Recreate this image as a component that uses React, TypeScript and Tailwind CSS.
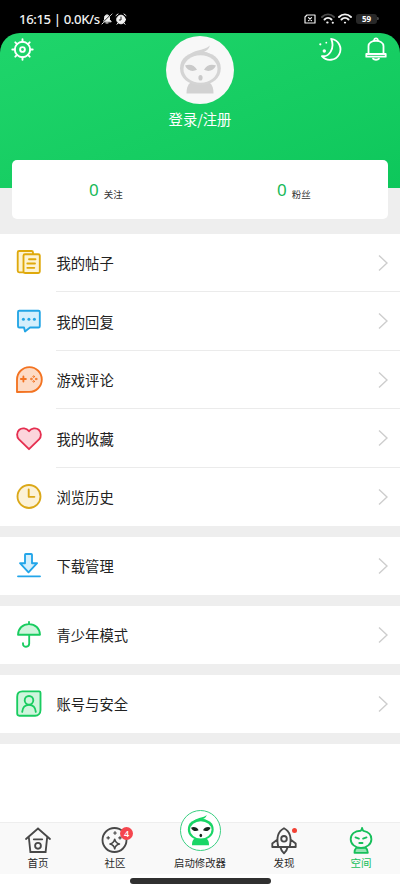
import type { ReactNode } from "react";

type IconProps = { children: ReactNode; color?: string; fill?: string; size?: string; box?: string; width?: number };

function Icon({ children, color = "currentColor", fill = "none", size = "h-8 w-8", box = "0 0 32 32", width = 1.85 }: IconProps) {
  return (
    <svg viewBox={box} className={`${size} block shrink-0`} fill={fill} stroke={color} strokeWidth={width} strokeLinecap="round" strokeLinejoin="round">
      {children}
    </svg>
  );
}

function Chevron() {
  return (
    <Icon size="h-4 w-[10px]" box="0 0 10 16" color="#cdcdcd" width={1.4}>
      <path d="M1 .5l8 7.500L1 15.500" strokeLinecap="butt" strokeLinejoin="miter" />
    </Icon>
  );
}

function PostsIcon() {
  return (
    <Icon color="#dfa90b" fill="#fdf3d3">
      <path d="M10.500 25.300H6.200a1.500 1.500 0 0 1-1.500-1.500V5.500A1.500 1.500 0 0 1 6.200 4h12.300a1.500 1.500 0 0 1 1.500 1.500v1.700" />
      <rect x="10.500" y="7.200" width="16.300" height="18.800" rx="1.500" />
      <path d="M16 12.200h6.500M14.300 16.500h7.700M14.300 20.800h7" fill="none" />
    </Icon>
  );
}

function ReplyIcon() {
  return (
    <Icon color="#22a5e5" fill="#d4effc">
      <path d="M6.300 4.700h19.200A1.300 1.300 0 0 1 26.800 6v14.200a1.300 1.300 0 0 1-1.300 1.300H17L12 25.500 11 21.500H6.300A1.300 1.300 0 0 1 5 20.200V6a1.300 1.300 0 0 1 1.300-1.300z" />
      <g fill="#22a5e5" stroke="none"><circle cx="10.400" cy="13.300" r="1.500" /><circle cx="15.900" cy="13.300" r="1.500" /><circle cx="21.400" cy="13.300" r="1.500" /></g>
    </Icon>
  );
}

function GameIcon() {
  return (
    <Icon color="#f37321" fill="#fddbc5">
      <path d="M4 28V15.500A12.400 12.400 0 1 1 16.400 27.900z" />
      <path d="M10.400 12.500v5M7.900 15h5" />
      <g strokeWidth="1"><circle cx="20.700" cy="12.600" r=".8" /><circle cx="20.700" cy="17.400" r=".8" /><circle cx="18.300" cy="15" r=".8" /><circle cx="23.100" cy="15" r=".8" /></g>
    </Icon>
  );
}

function HeartIcon() {
  return (
    <Icon color="#e52f50" fill="#fcd5dc">
      <path d="M16 26.200L6 16.400C3.400 13.700 3.500 9.100 6.300 6.700c2.800-2.300 7-1.600 9.700 1.500 2.700-3.100 6.900-3.800 9.700-1.500 2.800 2.400 2.900 7 .3 9.700z" />
    </Icon>
  );
}

function HistoryIcon() {
  return (
    <Icon color="#dba818" fill="#fcf2d7">
      <circle cx="16" cy="15.500" r="11.500" />
      <path d="M15.700 8.500v7.300h5.700" fill="none" />
    </Icon>
  );
}

function DownloadIcon() {
  return (
    <Icon color="#22a5e9" fill="#d4effc">
      <path d="M12.800 4h5.400a.8.8 0 0 1 .8.8v8.400h5.100l-8.600 9.100-8.500-9.100h5V4.800a.8.8 0 0 1 .8-.8z" />
      <path d="M5 26.300h22" />
    </Icon>
  );
}

function UmbrellaIcon() {
  return (
    <Icon color="#19cc60" fill="#cff5dd">
      <path d="M16 2.800v2.100M5 15.700C5.200 9.200 9.800 5.100 16 5.100s10.800 4.100 11 10.600z" />
      <path d="M16.200 15.800v8.800c0 4.200-6.200 4.200-6.200.3v-.8" fill="none" />
    </Icon>
  );
}

function AccountIcon() {
  return (
    <Icon color="#19cc60" fill="#cff5dd">
      <path d="M9.500 3.400h16.600c.9 0 1.400.6 1.400 1.400v17.200c0 3.300-2.200 5.700-5.400 5.700H6.300c-1.400 0-2.100-.8-2.100-2.100V8.700c0-3.300 2-5.300 5.300-5.300z" />
      <circle cx="16" cy="12.300" r="4.300" />
      <path d="M9.200 23.900c.4-4.600 3-7.100 6.800-7.100s6.400 2.500 6.800 7.100" fill="none" />
    </Icon>
  );
}

type MascotProps = { size: string; line: string; face: string; eyes: string; body: string };

function Mascot({ size, line, face, eyes, body }: MascotProps) {
  return (
    <svg viewBox="0 0 68 68" className={`${size} block`}>
      <path d="M24 47h20c2.500 2 3.500 5.500 3.500 10.500h-27c0-5 1-8.500 3.500-10.500z" fill={body} />
      <path d="M34.400 16C22 16 14 22.500 14 32.300S22 49 34.400 49s20.400-7 20.400-16.700S46.800 16 34.400 16z" fill={line} />
      <ellipse cx="34.500" cy="33" rx="17" ry="13.800" fill={face} />
      <path d="M22 20.500c5-7.500 14.500-5 22-11-1.300 3.800-3.600 5.500-6 6.300 4 .2 6.500 2 8.500 5.200-7-3.300-14-4-24.500-.5z" fill={line} />
      <path d="M19 29.500c4.500-2 9.800-.5 12 4.300-4.500 2.300-10 1-12-4.300zM50 29.500c-4.500-2-9.800-.5-12 4.300 4.500 2.300 10 1 12-4.300z" fill={eyes} />
      <ellipse cx="34.500" cy="41.800" rx="2.100" ry="2.800" fill={eyes} />
    </svg>
  );
}

function StatusBar() {
  return (
    <div className="flex h-[33px] items-center bg-black pt-1 pl-[19px] text-[#f1f1f1]">
      <span className="w-[82px] whitespace-nowrap pt-px font-['Noto_Sans',sans-serif] text-[13.200px] leading-4 font-medium tracking-[-0.400px]">16:15 | 0.0K/s</span>
      <Icon size="h-3 w-3" box="0 0 12 12" width={1}>
        <path d="M2.500 8.500l1-2V4.500C3.500 1 8.500 1 8.500 4.500v2l1.500 2zM5 10h2M1 11L11 1" fill="currentColor" />
        <path d="M1.500 9.800L10 1.300" stroke="#000" strokeWidth=".8" />
      </Icon>
      <span className="ml-[2px]">
        <Icon size="h-3 w-3" box="0 0 12 12" width={1}>
          <circle cx="6" cy="6.500" r="4.300" fill="currentColor" />
          <path d="M1 2.600L3 1M9 1l2 1.600M3 10l-1 1.200M9 10l1 1.200" />
          <path d="M6 4v3H4.300" stroke="#222" fill="none" />
        </Icon>
      </span>
      <div className="ml-auto flex items-center pr-[21px]">
        <Icon size="h-[10px] w-3" box="0 0 12 10" width={1.200}><path d="M3 1h8v8H1V3zM4.500 3.700l3 3m0-3l-3 3" /></Icon>
        <span className="ml-[5px]">
          <Icon size="h-3 w-[14px]" box="0 0 14 12" width={1.900}>
            <path d="M1 4c3.500-3.500 8.500-3.500 12 0" stroke="#4b4b4b" /><path d="M3.500 6.500c2-2 5-2 7 0" /><path d="M6.200 9.600h.4M11.700 9.800h.2" strokeWidth="2" />
          </Icon>
        </span>
        <span className="ml-[3px]">
          <Icon size="h-3 w-[14px]" box="0 0 14 12" width={1.900}><path d="M1 4c3.500-3.500 8.500-3.500 12 0M3.500 6.500c2-2 5-2 7 0M6.800 9.600h.4" /></Icon>
        </span>
        <span className="ml-1 flex h-[10px] w-[21px] items-center justify-center rounded-[3px] bg-[#282828] font-['Open_Sans',sans-serif] text-[8px] leading-none font-bold text-white">59</span>
        <span className="h-[3px] w-[2px] rounded-r bg-[#444]" />
      </div>
    </div>
  );
}

function Header() {
  return (
    <div className="bg-black">
      <header className="grid h-[155px] grid-cols-[1fr_80px_1fr] items-start rounded-t-[20px] bg-linear-to-br from-[#1fd56b] to-[#0dc75b] text-white">
        <div className="pt-1 pl-[10px]">
          <Icon size="h-6 w-6" box="0 0 24 24" width={1.900}>
            <circle cx="12.500" cy="12.500" r="7.700" /><circle cx="12.500" cy="12.500" r="2.400" />
            <path d="M12.500 4.800V2.300M12.500 20.200v2.500M4.800 12.500H2.300M20.200 12.500h2.500M7.100 7.100L5.300 5.300M17.900 7.100l1.800-1.800M7.100 17.900l-1.800 1.800M17.900 17.900l1.800 1.800" />
          </Icon>
        </div>
        <div className="flex flex-col items-center pt-[3px]">
          <div className="h-[68px] w-[68px] rounded-full bg-[#f8f8f8]">
            <Mascot size="h-[68px] w-[68px]" line="#d4d4d4" face="#f5f5f5" eyes="#c9c9c9" body="#d2d2d2" />
          </div>
          <span className="mt-[5px] whitespace-nowrap text-[14.300px] leading-5">登录/注册</span>
        </div>
        <div className="flex items-start justify-end gap-[22px] pt-1 pr-3">
          <Icon size="h-6 w-6" box="0 0 24 24" width={1.800}>
            <path d="M13.200 1.900a10.500 10.500 0 1 1-9.300 17.200C11 20.500 17.200 11.500 13.200 1.900z" />
            <g fill="currentColor" stroke="none"><circle cx="2.300" cy="7.300" r="1.100" /><circle cx="8.300" cy="5.700" r=".9" /><circle cx="6.300" cy="14" r="1.700" /></g>
          </Icon>
          <Icon size="h-6 w-6" box="0 0 24 24" width={1.800}>
            <path d="M4.500 17v-7.800c0-7.200 15-7.200 15 0V17h2.200v2.700H2.300V17zM9 21.700c1.200 1.400 4.800 1.400 6 0M10.200 3.500c-.3-2.800 3.900-2.800 3.600 0M4.500 17h15" />
          </Icon>
        </div>
      </header>
    </div>
  );
}

function Stat({ label }: { label: string }) {
  return (
    <div className="flex items-start gap-[5px] pt-[18px] pl-[77px]">
      <span className="font-['Noto_Sans',sans-serif] text-[17px] leading-6 text-[#16b957]">0</span>
      <span className="pt-[9px] text-[9.500px] leading-[14px] text-[#333]">{label}</span>
    </div>
  );
}

const activity = [
  { label: "我的帖子", icon: <PostsIcon /> },
  { label: "我的回复", icon: <ReplyIcon /> },
  { label: "游戏评论", icon: <GameIcon /> },
  { label: "我的收藏", icon: <HeartIcon /> },
  { label: "浏览历史", icon: <HistoryIcon /> },
];

const groups = [
  activity,
  [{ label: "下载管理", icon: <DownloadIcon /> }],
  [{ label: "青少年模式", icon: <UmbrellaIcon /> }],
  [{ label: "账号与安全", icon: <AccountIcon /> }],
];

function Row({ label, icon, divider }: { label: string; icon: ReactNode; divider: boolean }) {
  return (
    <div className="flex h-[58.500px] items-center pl-[13px]">
      <span className="pt-px">{icon}</span>
      <div className={`ml-[11px] flex h-full flex-1 items-center justify-between border-b pr-3 ${divider ? "border-[#ebebeb]" : "border-transparent"}`}>
        <span className="pt-[2px] pl-[0.500px] text-[14.300px] leading-5 text-[#222]">{label}</span>
        <span className="pt-px"><Chevron /></span>
      </div>
    </div>
  );
}

function Tab({ label, active, children }: { label: string; active?: boolean; children: ReactNode }) {
  return (
    <div className={`flex w-[60px] flex-col items-center pt-px ${active ? "text-[#16bf5a]" : "text-[#484848]"}`}>
      <div className="relative">{children}</div>
      <span className={`whitespace-nowrap text-[10.500px] leading-[14px] ${active ? "" : "text-[#292929]"}`}>{label}</span>
    </div>
  );
}

function BottomNav() {
  return (
    <nav className="flex h-[52px] items-start border-t border-[#eeeeee] bg-[#f9f9f9] pl-2">
      <Tab label="首页">
        <Icon><path d="M4 15L16 4.500 28 15M6.800 13l1.600 15h15.200l1.600-15M11.800 15.300h8.400" strokeLinejoin="miter" /><circle cx="16" cy="21.800" r="2.900" /></Icon>
      </Tab>
      <div className="ml-[17px]">
        <Tab label="社区">
          <Icon><circle cx="15.500" cy="16" r="12" /><path d="M15.700 15.200q.8 4 4.700 4.800-3.900.8-4.700 4.800-.8-4-4.700-4.800 3.900-.8 4.700-4.800z" strokeWidth="1.600" /><path d="M9.200 12.500v2.600M7.900 13.800h2.600M16 7.700v2.600M14.700 9h2.600M21 12.500v2.600M19.700 13.800h2.600" strokeWidth="1.200" /></Icon>
          <span className="absolute top-[3px] -right-[2px] flex h-[13px] w-[13px] items-center justify-center rounded-full bg-[#f5464e] font-['Open_Sans',sans-serif] text-[9px] leading-none font-semibold text-white">4</span>
        </Tab>
      </div>
      <div className="-mt-[13px] ml-[25px] flex w-[60px] flex-col items-center">
        <div className="flex h-[41px] w-[41px] items-center justify-center rounded-full border-[1.500px] border-[#39cf81] bg-white">
          <Mascot size="h-[43px] w-[43px] shrink-0" line="#19d666" face="#ffffff" eyes="#17251d" body="#19d666" />
        </div>
        <span className="mt-[5px] whitespace-nowrap text-[10.400px] leading-[14px] text-[#292929]">启动修改器</span>
      </div>
      <div className="ml-6">
        <Tab label="发现">
          <Icon><path d="M10.300 23c-1.700-7.400-1.300-15.100 5.700-18.700 7 3.600 7.400 11.300 5.700 18.700zM9.500 15.500L4.300 19.500V23h6M22.500 15.500l5.200 4V23h-6M12.300 23c.5 2.500 1.900 4.500 3.700 6.300 1.800-1.800 3.200-3.800 3.700-6.300" /><circle cx="16" cy="14.800" r="2.800" /></Icon>
          <span className="absolute top-[4px] right-[3px] h-[5px] w-[5px] rounded-full bg-[#f34235]" />
        </Tab>
      </div>
      <div className="ml-[17px]">
        <Tab label="空间" active>
          <Icon><path d="M11.200 23.800h9.600c1.500 1.400 2 2.900 2 5H9.500c0-2.100.3-3.600 1.700-5z" fill="#95e5b3" /><path d="M15.700 6.700c-6.200 0-10 3.600-10 8.500s4.600 8.700 10.300 8.700 10.400-3.800 10.400-8.700c0-4.300-3.200-7.400-7.900-8.300-.8-.5-1-1.400-1.400-2.900-.2 1.300-.7 2.200-1.400 2.700zM10.500 13.400l3.400 1.200M21.500 13.400l-3.400 1.200M14.300 19h3.200" /></Icon>
        </Tab>
      </div>
    </nav>
  );
}

export default function App() {
  return (
    <main className="flex h-[889px] w-[400px] flex-col overflow-hidden bg-white font-['Noto_Sans_CJK_SC',sans-serif]">
      <StatusBar />
      <Header />
      <section className="h-[45.500px] bg-[#eeeeee] px-3">
        <div className="relative -top-7 grid h-[59px] grid-cols-2 rounded-[5px] bg-white"><Stat label="关注" /><Stat label="粉丝" /></div>
      </section>
      <div className="flex flex-col gap-[10.500px] border-b-[11px] border-[#eeeeee] bg-[#eeeeee]">
        {groups.map((rows) => (
          <section key={rows[0].label} className="bg-white">
            {rows.map((row, i) => <Row key={row.label} {...row} divider={i < rows.length - 1} />)}
          </section>
        ))}
      </div>
      <div className="flex-1" />
      <BottomNav />
      <div className="flex h-[15px] items-start justify-center pt-[3.500px]"><div className="h-[6px] w-[141px] rounded-full bg-[#303030]" /></div>
    </main>
  );
}
